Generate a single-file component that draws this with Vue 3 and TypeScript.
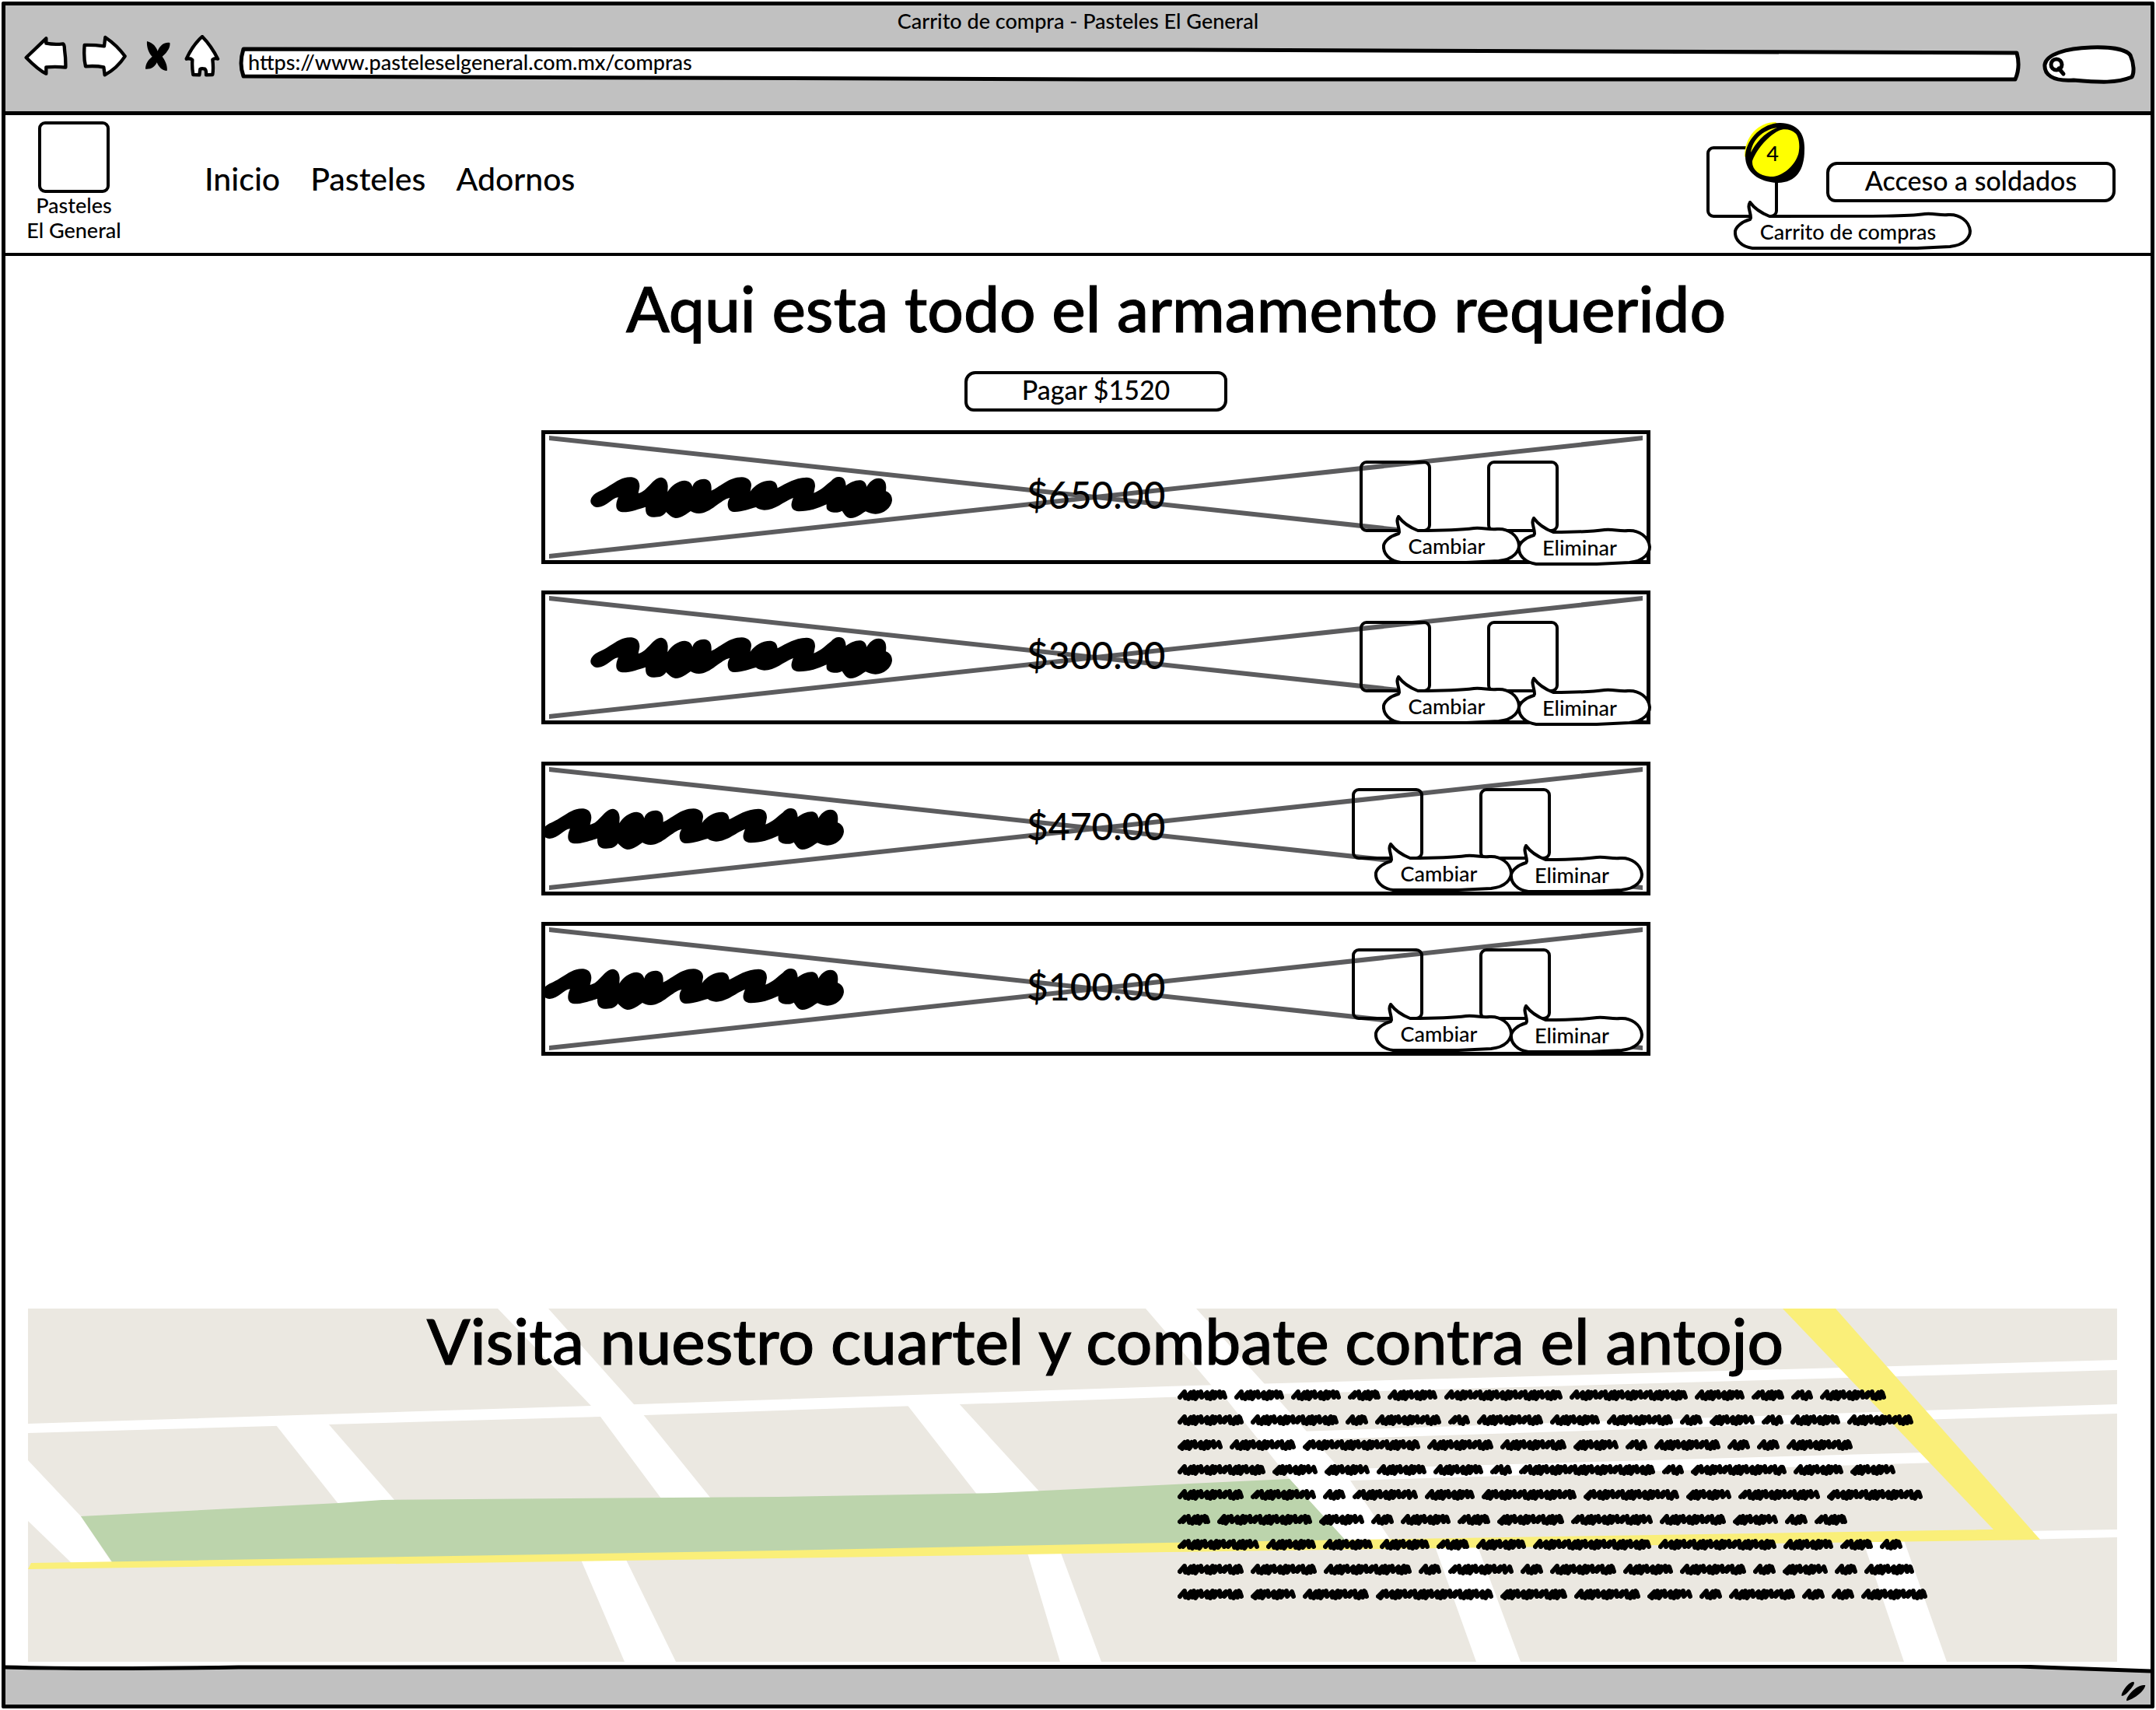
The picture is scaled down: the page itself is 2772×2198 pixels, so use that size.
<script setup lang="ts">
interface CartItem {
  id: number
  price: string
}

const groups: { name: string; items: CartItem[] }[] = [
  { name: 'inset', items: [{ id: 1, price: '$650.00' }, { id: 2, price: '$300.00' }] },
  { name: 'flush', items: [{ id: 3, price: '$470.00' }, { id: 4, price: '$100.00' }] },
]

const actions = [
  { label: 'Cambiar', width: 178, cls: 'change' },
  { label: 'Eliminar', width: 172, cls: 'remove' },
]

// Word widths of the placeholder paragraph, one array per line
const scribbleLines: number[][] = [
  [64, 64, 64, 42, 64, 152, 152, 64, 42, 28, 85],
  [85, 113, 29, 85, 28, 85, 64, 85, 29, 58, 28, 64, 85],
  [58, 85, 151, 85, 85, 58, 28, 85, 29, 29, 85],
  [113, 58, 58, 64, 64, 28, 175, 28, 123, 64, 58],
  [85, 84, 29, 84, 64, 122, 123, 58, 105, 123],
  [42, 122, 58, 29, 64, 42, 86, 105, 85, 58, 29, 42],
  [105, 64, 64, 64, 42, 64, 152, 152, 64, 42, 29],
  [85, 85, 113, 29, 84, 29, 85, 64, 85, 29, 58, 29, 64],
  [85, 58, 85, 151, 86, 85, 58, 29, 85, 29, 29, 85],
]

// Zigzag pen stroke that fills a word of the given width
function wordPath(width: number): string {
  const steps = [5, 8, 4, 5, 4, 8, 7, 4, 5, 8]
  const tops = [4, 3, 4, 3, 4, 3, 4, 3, 4, 3]
  const bottoms = [10, 11, 12, 11, 12, 10, 11, 12, 11, 10]
  let x = 3
  let i = width % 7
  let d = 'M3 10'
  while (x + 8 < width - 2) {
    const k = i % 10
    d += `L${x + 6} ${tops[k]}L${x + steps[k] - 1} ${bottoms[k]}`
    x += steps[k]
    i++
  }
  return d + `L${width - 5} 4L${width - 3} 10`
}

// Speech bubble with its tail at the upper left
function bubblePath(w: number): string {
  return (
    `M22 22L21 24C10 27 3 34 2 39C1 50 10 59 24 61L${w - 70} 61L${w - 28} 59` +
    `C${w - 8} 57 ${w - 2} 46 ${w - 2} 39C${w - 3} 26 ${w - 16} 17 ${w - 30} 18` +
    `C${w - 42} 19 ${w - 48} 16 ${w - 60} 17C${w - 82} 20 ${w - 104} 20 46 20` +
    `C36 16 26 9 21 2C17 8 22 14 22 22Z`
  )
}

const blobPath =
  'M30 150C45 125 60 130 100 103C130 85 150 68 185 70C205 72 216 85 216 105C215 118 212 125 211 132C230 128 240 115 260 95C272 82 285 70 300 71C318 74 324 88 325 105L324 127C335 105 365 83 390 83C405 84 416 92 420 107C425 88 440 78 465 77C485 78 494 92 493 115L493 122C520 112 560 70 610 70C635 71 648 85 647 103L643 125C660 100 690 82 722 83C740 85 747 98 748 112C780 95 815 72 860 71C885 72 893 85 893 105L888 131C915 122 935 100 955 85C965 72 980 66 992 70C1005 73 1011 85 1012 103C1030 88 1055 78 1075 83C1087 88 1090 98 1092 107C1100 92 1115 74 1138 74C1160 75 1167 90 1167 110L1166 124C1185 132 1190 145 1190 160C1187 190 1155 213 1125 212C1110 212 1100 207 1088 202C1070 212 1055 228 1030 228C1012 226 1005 212 997 200C985 208 950 212 938 192C936 185 937 178 937 175C905 190 870 202 830 202C805 200 800 185 802 172C803 165 806 155 809 150C780 158 740 197 697 197C685 197 672 192 665 186C640 192 610 205 580 204C560 202 555 185 556 172C557 162 560 155 564 150C530 155 490 210 445 210C430 210 420 205 413 201C395 212 380 228 355 228C338 226 325 210 318 204C310 220 290 225 268 224C245 222 238 210 239 185C215 192 180 206 150 205C130 203 125 190 126 175C127 165 130 155 134 148C110 148 90 185 55 186C35 185 20 170 30 150Z'
</script>

<template>
  <div class="window">
    <header class="chrome">
      <div class="chrome-title">Carrito de compra - Pasteles El General</div>
      <div class="toolbar">
        <div class="nav-buttons">
          <button type="button" class="tool" aria-label="Atrás">
            <svg width="56" height="50" viewBox="34 24 168 150"><path class="outline" d="M42 105L119 31L119 50Q150 56 184 52Q190 54 190 75Q195 110 194 143Q160 139 119 142L119 167Q90 154 42 105Z" /></svg>
          </button>
          <button type="button" class="tool" aria-label="Adelante">
            <svg width="58" height="54" viewBox="255 22 174 162"><path class="outline" d="M266 61Q300 60 342 65L346 31Q392 62 422 104Q392 150 344 176L340 146Q310 140 270 143Q262 110 266 61Z" /></svg>
          </button>
          <button type="button" class="tool stop" aria-label="Detener">
            <svg width="32" height="38" viewBox="504 36 96 114"><path d="M510 36C535 42 546 60 551 74C560 50 580 38 598 42C602 62 582 85 569 95C580 110 590 130 587 150C568 150 555 135 548 118C540 136 525 145 504 143C504 122 515 108 530 95C515 80 508 55 510 36Z" /></svg>
          </button>
          <button type="button" class="tool" aria-label="Inicio">
            <svg width="46" height="54" viewBox="651 20 138 162"><path class="outline" d="M720 26Q755 62 780 112Q768 108 760 115Q764 150 760 173L735 174Q736 155 730 151Q718 147 712 152L709 174L685 173Q680 145 682 116Q674 108 659 112Q684 58 720 26Z" /></svg>
          </button>
        </div>
        <div class="url">
          <svg class="backdrop" viewBox="0 0 2288 46" preserveAspectRatio="none" aria-hidden="true">
            <path class="bar" d="M6 3L1200 4L2283 8Q2288 26 2281 42L1100 42L6 38Q0 22 6 3Z" />
          </svg>
          <input type="text" aria-label="Dirección" value="https://www.pasteleselgeneral.com.mx/compras" />
        </div>
        <div class="search">
          <svg class="backdrop" viewBox="0 0 120 50" aria-hidden="true">
            <path class="bar" d="M62 3C90 2 108 6 113 13C118 24 118 36 115 41C95 49 75 48 40 45C12 47 2 37 3 25C5 12 30 4 62 3Z" />
            <circle class="bar" cx="18" cy="25" r="7" />
            <path class="bar" d="M21 30L27 37" />
          </svg>
          <input type="search" aria-label="Buscar" />
        </div>
      </div>
    </header>

    <div class="site-header">
      <a href="#" class="logo">
        <span class="square"></span>
        <span>Pasteles</span>
        <span>El General</span>
      </a>
      <nav class="menu">
        <a href="#">Inicio</a>
        <a href="#">Pasteles</a>
        <a href="#">Adornos</a>
      </nav>
      <button type="button" class="square action cart-button">
        <span class="bubble cart-bubble">
          <svg width="306" height="64" aria-hidden="true"><path class="bar thin" :d="bubblePath(306)" /></svg>
          <span>Carrito de compras</span>
        </span>
        <span class="badge">
          <svg width="78" height="79" viewBox="0 0 78 79" aria-hidden="true">
            <path fill="#ffff00" d="M0 44C0 18 18 0 40 0L60 20L20 60Z" />
            <path d="M1 42C3 20 24 1 46 1C68 2 78 14 77 36C77 62 66 78 42 78C18 77 0 64 1 42Z" />
            <path fill="#ffff00" d="M42 7C22 10 10 24 8 39C14 28 24 14 42 7Z" />
            <path fill="#ffff00" d="M44 11C50 8 60 9 65 14C70 18 71 30 70 36C69 52 50 71 33 70C18 69 9 60 10 50C14 38 28 19 44 11Z" />
          </svg>
          <span>4</span>
        </span>
      </button>
      <button type="button" class="sketch access">Acceso a soldados</button>
    </div>

    <main>
      <h1>Aqui esta todo el armamento requerido</h1>
      <section class="cart">
        <button type="button" class="sketch pay">Pagar $1520</button>
        <ul v-for="group in groups" :key="group.name" :class="['group', group.name]">
          <li v-for="item in group.items" :key="item.id" class="item">
            <svg class="cross" viewBox="0 0 1406 158" preserveAspectRatio="none" aria-hidden="true">
              <path d="M-9 2L1415 156M-9 156L1415 2" />
            </svg>
            <svg class="blob" width="388" height="53" viewBox="26 69 1164 159" aria-hidden="true"><path :d="blobPath" /></svg>
            <span class="price">{{ item.price }}</span>
            <div class="actions">
              <button v-for="a in actions" :key="a.label" type="button" :class="['square', 'action', a.cls]">
                <span class="bubble">
                  <svg :width="a.width" height="64" aria-hidden="true"><path class="bar thin" :d="bubblePath(a.width)" /></svg>
                  <span>{{ a.label }}</span>
                </span>
              </button>
            </div>
          </li>
        </ul>
      </section>
      <section class="map">
        <svg class="backdrop" viewBox="36 1682 2686 454" preserveAspectRatio="none" aria-hidden="true">
          <rect x="36" y="1682" width="2686" height="454" fill="#ebe8e1" />
          <g fill="#ffffff">
            <path d="M36 1830L760 1807L1500 1782L2722 1748V1761L1500 1796L772 1821L36 1842Z" />
            <path d="M1670 1840L2500 1812L2722 1805V1817L2500 1824L1670 1851Z" />
            <path d="M1700 1889L2475 1867L2490 1880L1736 1903Z" />
            <path d="M2600 1968L2722 1966V1976L2600 1979Z" />
            <path d="M36 1877L104 1949L145 2010H93L36 1955Z" />
            <path d="M355 1832L422 1830L508 1929L435 1933Z" />
            <path d="M640 1682H705L814 1804L826 1817L914 1926H850L772 1821L760 1807Z" />
            <path d="M1165 1804L1231 1802L1338 1919L1257 1922Z" />
            <path d="M1473 1682H1538L1626 1779L1680 1840L1736 1903L1789 1981H1731L1658 1901L1578 1800L1557 1780Z" />
            <path d="M747 2005H805L869 2136H803Z" />
            <path d="M1321 1996H1364L1416 2136H1363Z" />
            <path d="M1845 1988H1900L1955 2136H1898Z" />
            <path d="M2395 1980H2448L2503 2136H2448Z" />
          </g>
          <path fill="#bcd4ac" d="M104 1949L435 1932L491 1928L1000 1924L1279 1919L1658 1901L1731 1981L145 2009Z" />
          <path fill="#faef79" d="M40 2009L1000 1993L1500 1983L2563 1966L2292 1682H2360L2623 1979L1500 1995L1000 2003L36 2017Z" />
        </svg>
        <h2>Visita nuestro cuartel y combate contra el antojo</h2>
        <div class="scribbles" aria-hidden="true">
          <div v-for="(line, n) in scribbleLines" :key="n" class="scribble-line">
            <svg v-for="(w, k) in line" :key="k" :width="w" height="15"><path :d="wordPath(w)" /></svg>
          </div>
        </div>
      </section>
    </main>

    <footer class="status">
      <svg class="backdrop" viewBox="0 0 2759 51" preserveAspectRatio="none" aria-hidden="true">
        <path fill="#c1c1c1" d="M0 3Q120 6 300 3L2300 2L2590 2Q2700 6 2759 8V51H0Z" />
        <path class="bar clear" d="M0 3Q120 6 300 3L2300 2L2590 2Q2700 6 2759 8" />
      </svg>
      <svg class="grip" width="32" height="26" viewBox="0 0 96 78" aria-hidden="true">
        <path d="M2 56C2 40 30 2 48 2C58 6 40 28 30 38C20 50 8 58 2 56Z" />
        <path d="M22 76C16 62 64 8 94 16C92 32 68 54 52 62C40 70 28 74 22 76Z" />
      </svg>
    </footer>
  </div>
</template>

<style>
body {
  margin: 0;
  background: #ffffff;
}
</style>

<style scoped>
.window {
  --small: 27px;
  --button: 34px;
  --menu: 41px;
  --price: 48px;
  --heading: 82px;
  box-sizing: border-box;
  display: flex;
  flex-direction: column;
  min-height: calc(100vh - 4px);
  margin: 2px;
  border: 5px solid #000000;
  border-radius: 2px;
  font-family: Lato, 'Open Sans', sans-serif;
  font-size: var(--small);
  font-weight: 500;
  line-height: 32px;
  color: #000000;
}
button,
input {
  margin: 0;
  padding: 0;
  border: 0;
  background: none;
  color: inherit;
  font: inherit;
}
a {
  color: inherit;
  text-decoration: none;
}
svg {
  display: block;
}
.backdrop {
  position: absolute;
  inset: 0;
  width: 100%;
  height: 100%;
}
.bar {
  fill: #ffffff;
  stroke: #000000;
  stroke-width: 5px;
  stroke-linejoin: round;
  stroke-linecap: round;
  vector-effect: non-scaling-stroke;
}
.thin {
  stroke-width: 4px;
}
.clear {
  fill: none;
}
.outline {
  fill: #ffffff;
  stroke: #000000;
  stroke-width: 13px;
  stroke-linejoin: round;
}

.chrome {
  padding-bottom: 22px;
  background: #c1c1c1;
  border-bottom: 5px solid #000000;
}
.chrome-title {
  padding: 4px 0 2px;
  text-align: center;
}
.toolbar {
  display: flex;
  align-items: center;
  padding: 0 19px 0 24px;
}
.nav-buttons {
  display: flex;
  align-items: center;
  gap: 18px;
  padding-bottom: 22px;
}
.stop {
  display: flex;
  justify-content: flex-end;
  width: 38px;
}
.url {
  position: relative;
  flex: 1;
  display: flex;
  height: 46px;
  margin: 0 28px 0 24px;
}
.url input {
  position: relative;
  flex: 1;
  padding: 0 12px 6px;
  outline: none;
}
.search {
  position: relative;
  display: flex;
  width: 120px;
  height: 50px;
}
.search input {
  position: relative;
  width: 100%;
  padding: 0 12px 0 36px;
  outline: none;
}

.site-header {
  display: flex;
  align-items: center;
  padding: 8px 45px 13px 26px;
  border-bottom: 4px solid #000000;
}
.logo {
  display: flex;
  flex-direction: column;
  align-items: center;
  width: 124px;
}
.square {
  box-sizing: border-box;
  width: 92px;
  height: 92px;
  border: 4px solid #000000;
  border-radius: 9px;
}
.menu {
  display: flex;
  flex: 1;
  gap: 39px;
  padding: 0 0 9px 106px;
  font-size: var(--menu);
  line-height: 44px;
}
.action {
  position: relative;
}
.bubble {
  position: absolute;
  top: 66px;
  left: 25px;
  z-index: 1;
}
.bubble > span {
  position: absolute;
  inset: 24px 12px auto 0;
  text-align: center;
  white-space: nowrap;
}
.remove .bubble {
  top: 68px;
  left: 35px;
}
.cart-button {
  margin-right: 62px;
}
.cart-bubble {
  left: 31px;
}
.badge {
  position: absolute;
  top: -35px;
  left: 45px;
}
.badge > span {
  position: absolute;
  inset: 24px 6px auto 0;
  text-align: center;
}
.sketch {
  padding-bottom: 4px;
  border: 4px solid #000000;
  border-radius: 14px 12px 14px 12px;
  font-size: var(--button);
  line-height: 40px;
}
.access {
  width: 372px;
}
.pay {
  width: 338px;
  margin-bottom: 24px;
}

main {
  display: flex;
  flex: 1;
  flex-direction: column;
}
h1,
h2 {
  margin: 0;
  font-size: var(--heading);
  font-weight: 500;
  line-height: 80px;
  text-align: center;
  -webkit-text-stroke: 1px #000000;
}
h1 {
  padding: 26px 0 42px 252px;
}
.cart {
  display: flex;
  flex-direction: column;
  align-items: center;
  padding: 0 0 120px 46px;
}
.group {
  display: flex;
  flex-direction: column;
  gap: 34px;
  width: 100%;
  max-width: 1426px;
  margin: 0;
  padding: 0;
  list-style: none;
}
.group + .group {
  margin-top: 48px;
}
.item {
  position: relative;
  box-sizing: border-box;
  display: grid;
  grid-template-columns: 619px 1fr auto;
  align-items: center;
  height: 172px;
  border: 5px solid #000000;
}
.cross {
  position: absolute;
  inset: 2px 5px;
  width: calc(100% - 10px);
  height: calc(100% - 4px);
}
.cross path {
  fill: none;
  stroke: #5c5c5e;
  stroke-width: 6px;
}
.blob,
.price,
.actions {
  position: relative;
}
.inset .blob {
  margin-left: 58px;
}
.flush .blob {
  margin-left: -4px;
}
.price {
  padding-bottom: 6px;
  font-size: var(--price);
  line-height: 60px;
}
.actions {
  display: flex;
  align-self: start;
  gap: 72px;
}
.inset .actions {
  padding: 34px 113px 0 0;
}
.flush .actions {
  padding: 29px 123px 0 0;
}

.map {
  position: relative;
  box-sizing: border-box;
  min-height: 454px;
  margin: auto 43px 4px 29px;
}
.map h2 {
  position: relative;
  padding-left: 84px;
}
.scribbles {
  position: relative;
  display: flex;
  flex-direction: column;
  gap: 17px;
  padding: 24px 0 0 1478px;
}
.scribble-line {
  display: flex;
  gap: 9px;
}
.scribble-line path {
  fill: none;
  stroke: #000000;
  stroke-width: 6px;
  stroke-linejoin: round;
  stroke-linecap: round;
}

.status {
  position: relative;
  display: flex;
  justify-content: flex-end;
  padding: 21px 6px 4px;
}
.grip {
  position: relative;
}
</style>
